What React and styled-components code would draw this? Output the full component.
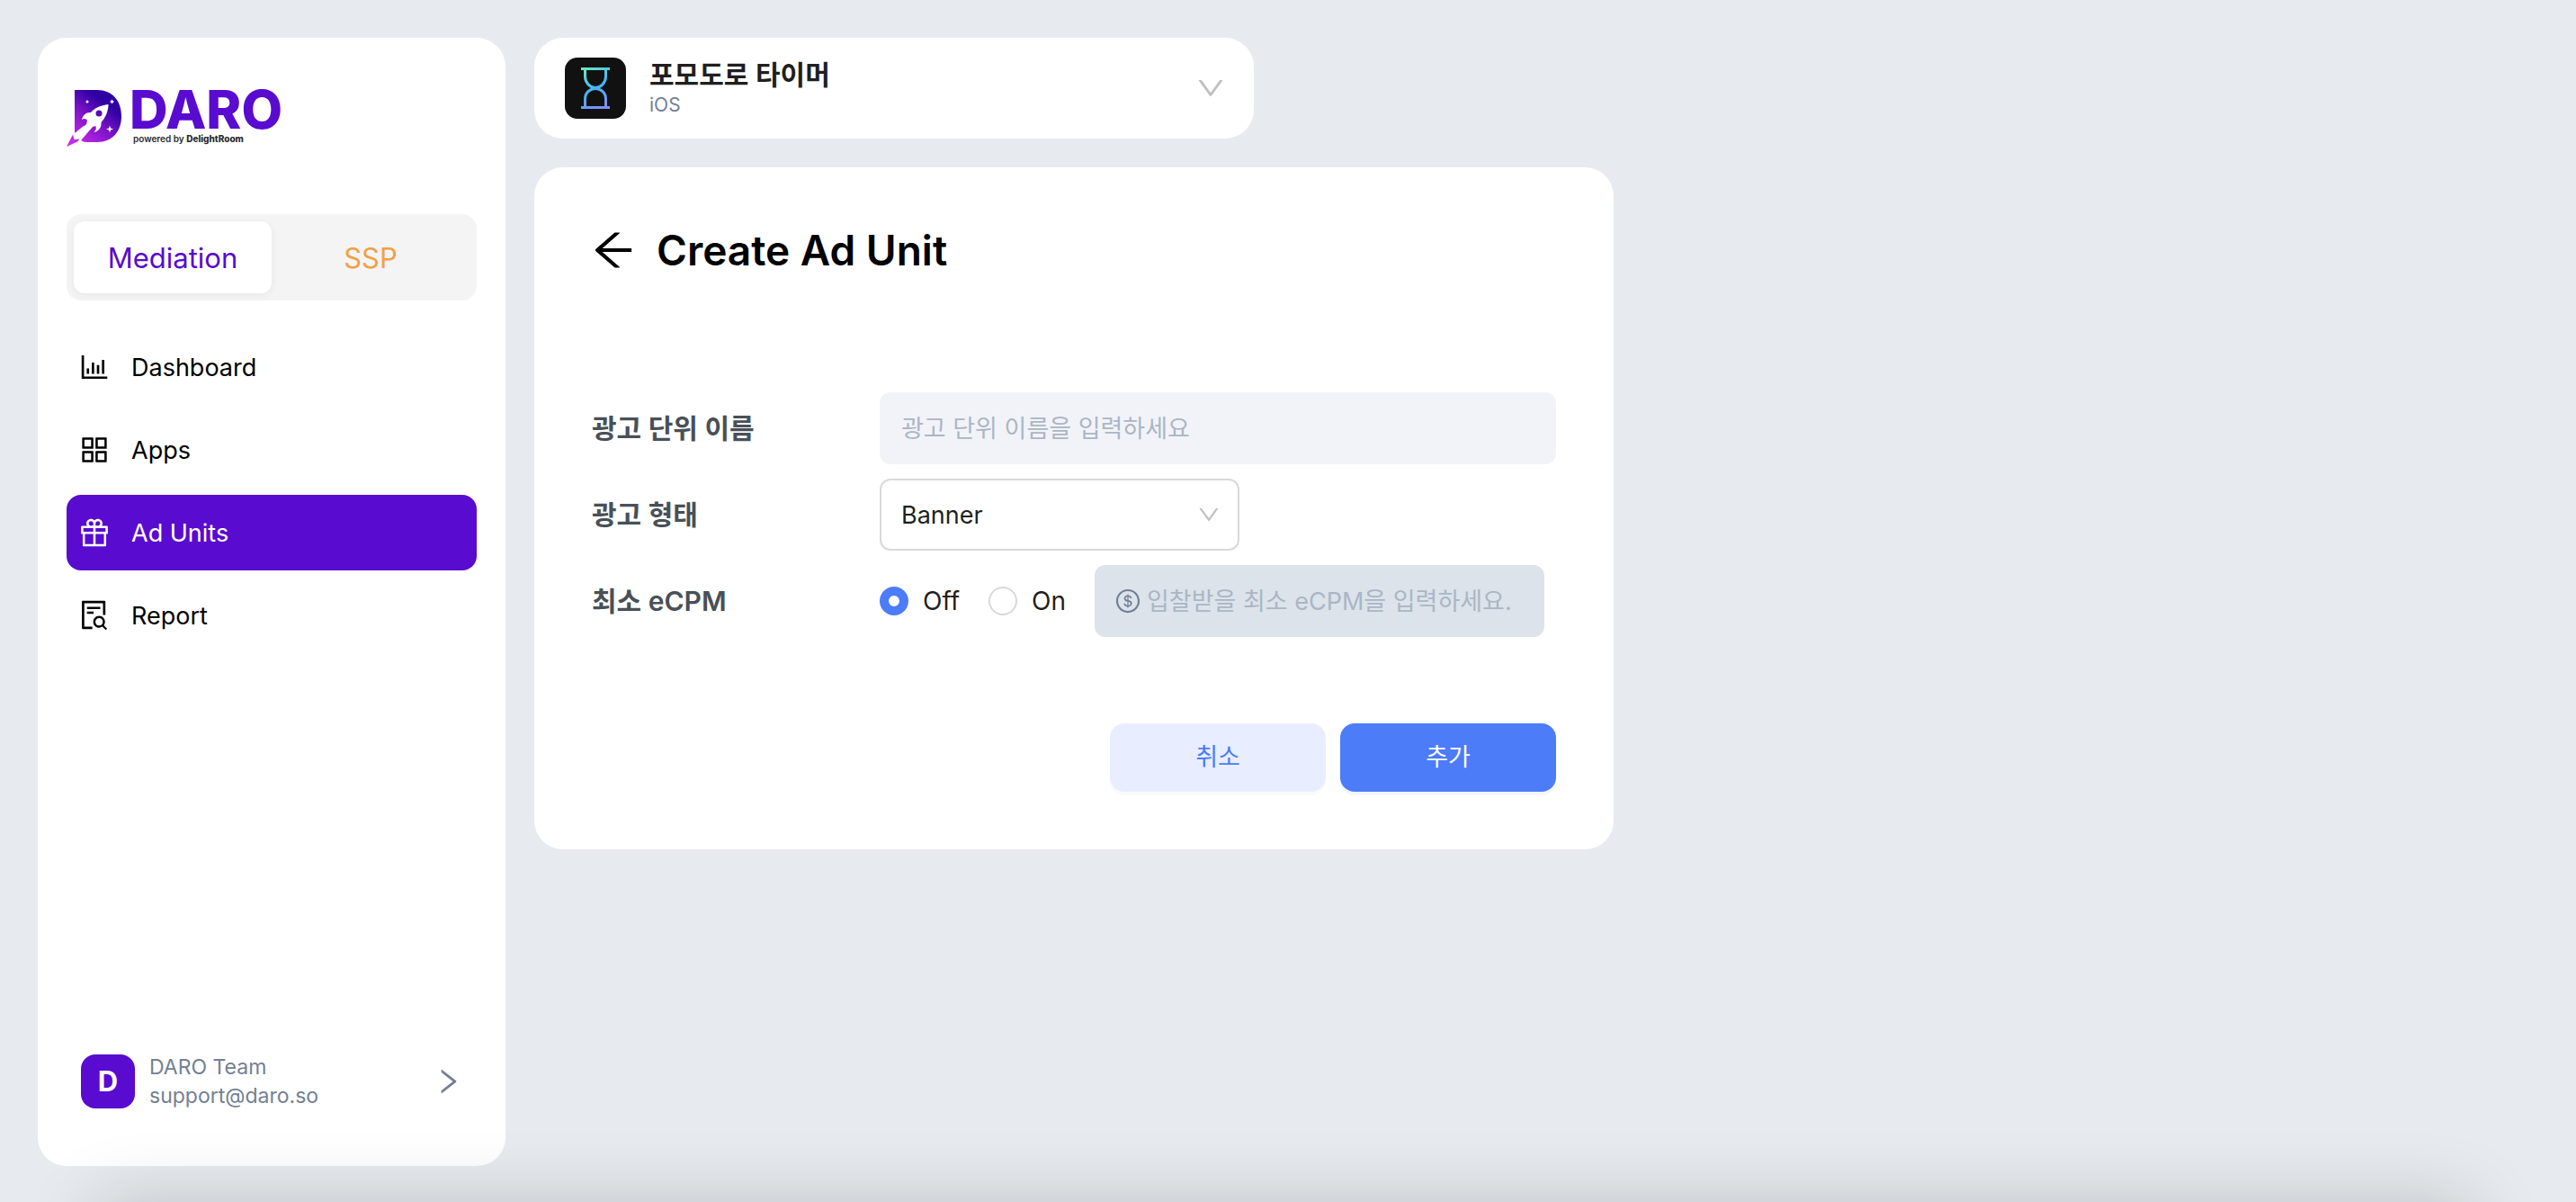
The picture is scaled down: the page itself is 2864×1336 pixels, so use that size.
import React, { useState } from "react";
import styled, { createGlobalStyle } from "styled-components";
import {
  AiOutlineBarChart,
  AiOutlineAppstore,
  AiOutlineGift,
  AiOutlineFileSearch,
  AiOutlineRight,
  AiOutlineDown,
  AiOutlineArrowLeft,
  AiOutlineDollarCircle,
} from "react-icons/ai";

const GlobalStyle = createGlobalStyle`
  *, *::before, *::after { box-sizing: border-box; }
  body {
    margin: 0;
    background: #e7ebef;
    color: #000;
    font-family: Inter, "Noto Sans CJK KR", sans-serif;
    font-size: 27px;
  }
  button, input, select { font: inherit; color: inherit; }
  h1, p { margin: 0; }
  svg { display: block; flex: none; }
`;

const Page = styled.div`
  display: flex;
  align-items: stretch;
  gap: 32px;
  min-height: 100vh;
  padding: 42px 42px 40px;
`;

const Sidebar = styled.aside`
  display: flex;
  flex-direction: column;
  flex: none;
  width: 520px;
  padding: 56px 32px 62px;
  background: #fff;
  border-radius: 32px;
`;

const Logo = styled.a`
  display: flex;
  gap: 8px;
  height: 68px;
  color: #590bd0;
  text-decoration: none;
`;

const LogoText = styled.span`
  display: flex;
  flex-direction: column;
`;

const LogoName = styled.span`
  font-size: 59px;
  font-weight: 800;
  line-height: 48px;
`;

const LogoTagline = styled.span`
  padding-left: 4px;
  color: #2b2b2b;
  font-size: 10px;
  font-weight: 600;
  line-height: 16px;

  b { font-weight: 800; }
`;

const Tabs = styled.div`
  display: flex;
  margin-top: 72px;
  padding: 8px;
  background: #f4f4f4;
  border-radius: 16px;
`;

const Tab = styled.button`
  flex: 1;
  height: 80px;
  padding: 0;
  border: 0;
  border-radius: 12px;
  background: ${(p) => (p.$active ? "#fff" : "transparent")};
  box-shadow: ${(p) => (p.$active ? "0 2px 8px rgba(0, 0, 0, 0.06)" : "none")};
  color: ${(p) => p.$color};
  font-size: 31px;
  cursor: pointer;
`;

const Nav = styled.nav`
  display: flex;
  flex-direction: column;
  gap: 8px;
  margin-top: 32px;
`;

const NavItem = styled.a`
  display: flex;
  align-items: center;
  gap: 22px;
  height: 84px;
  padding: 0 12px;
  border-radius: 16px;
  background: ${(p) => (p.$active ? "#590bd0" : "transparent")};
  color: ${(p) => (p.$active ? "#fff" : "#000")};
  text-decoration: none;
`;

const Account = styled.button`
  display: flex;
  align-items: center;
  gap: 16px;
  margin-top: auto;
  padding: 0 14px 0 16px;
  border: 0;
  background: none;
  color: #738093;
  font-size: 23px;
  line-height: 32px;
  text-align: left;
  cursor: pointer;
`;

const Avatar = styled.span`
  display: grid;
  place-items: center;
  width: 60px;
  height: 60px;
  border-radius: 16px;
  background: #590bd0;
  color: #fff;
  font-size: 31px;
  font-weight: 700;
`;

const AccountText = styled.span`
  display: flex;
  flex: 1;
  flex-direction: column;
`;

const Main = styled.main`
  display: flex;
  flex: 1;
  flex-direction: column;
  align-items: flex-start;
  gap: 32px;
  min-width: 0;
`;

const AppPicker = styled.button`
  display: flex;
  align-items: center;
  gap: 26px;
  width: 100%;
  max-width: 800px;
  height: 112px;
  padding: 0 30px 0 34px;
  border: 0;
  border-radius: 32px;
  background: #fff;
  color: #bfbfbf;
  text-align: left;
  cursor: pointer;
`;

const AppText = styled.span`
  display: flex;
  flex: 1;
  flex-direction: column;
`;

const AppName = styled.span`
  color: #1f1f1f;
  font-size: 30px;
  font-weight: 600;
  line-height: 38px;
`;

const AppPlatform = styled.span`
  color: #738093;
  font-size: 21px;
  line-height: 30px;
`;

const Card = styled.section`
  width: 100%;
  max-width: 1200px;
  padding: 64px;
  border-radius: 32px;
  background: #fff;
`;

const CardHeader = styled.header`
  display: flex;
  align-items: center;
  gap: 20px;
  height: 56px;
`;

const BackButton = styled.button`
  display: grid;
  place-items: center;
  width: 56px;
  height: 56px;
  margin-left: -4px;
  padding: 0;
  border: 0;
  background: none;
  cursor: pointer;
`;

const Title = styled.h1`
  font-size: 46px;
  font-weight: 600;
  line-height: 56px;
`;

const Form = styled.form`
  display: flex;
  flex-direction: column;
  gap: 16px;
  margin-top: 130px;
`;

const Row = styled.div`
  display: grid;
  grid-template-columns: 320px 1fr;
  align-items: center;
  min-height: 80px;
`;

const Label = styled.label`
  padding-bottom: 4px;
  color: #495057;
  font-size: 30px;
  font-weight: 600;
`;

const TextInput = styled.input`
  width: 100%;
  height: 80px;
  padding: 0 24px;
  border: 0;
  border-radius: 12px;
  background: #f2f3f8;

  &::placeholder { color: #aab6c5; opacity: 1; }
`;

const SelectBox = styled.div`
  display: grid;
  align-items: center;
  width: 400px;

  > * { grid-area: 1 / 1; }
  svg {
    justify-self: end;
    margin-right: 20px;
    color: #bfbfbf;
    pointer-events: none;
  }
`;

const Select = styled.select`
  width: 100%;
  height: 80px;
  padding: 0 22px;
  border: 2px solid #d9d9d9;
  border-radius: 12px;
  background: #fff;
  color: #1f1f1f;
  appearance: none;
`;

const Options = styled.div`
  display: flex;
  align-items: center;
  gap: 32px;
`;

const RadioLabel = styled.label`
  display: flex;
  align-items: center;
  gap: 16px;
  color: #1f1f1f;
  font-size: 28px;
`;

const Radio = styled.input`
  width: 32px;
  height: 32px;
  margin: 0;
  border: 2px solid #d9d9d9;
  border-radius: 50%;
  background: #fff;
  appearance: none;

  &:checked { border: 10px solid #4c7cf8; }
`;

const PriceBox = styled.label`
  display: flex;
  align-items: center;
  gap: 6px;
  width: 500px;
  height: 80px;
  padding: 0 22px;
  border-radius: 12px;
  background: #dce3ea;
  color: #738093;
`;

const PriceInput = styled.input`
  flex: 1;
  min-width: 0;
  padding: 0;
  border: 0;
  background: none;

  &::placeholder { color: #aab6c5; opacity: 1; }
`;

const Actions = styled.div`
  display: flex;
  justify-content: flex-end;
  gap: 16px;
  margin-top: 80px;
`;

const ActionButton = styled.button`
  width: 240px;
  height: 76px;
  padding: 0 0 6px;
  border: 0;
  border-radius: 16px;
  background: ${(p) => (p.$primary ? "#4c7cf8" : "#e8eeff")};
  box-shadow: 0 4px 0 ${(p) => (p.$primary ? "#f2f6ff" : "#fafafa")};
  color: ${(p) => (p.$primary ? "#fff" : "#4c7cf8")};
  cursor: pointer;
`;

const BottomShade = styled.div`
  position: fixed;
  top: 100%;
  left: 108px;
  right: 116px;
  height: 200px;
  box-shadow: 0 0 80px rgba(0, 0, 0, 0.18);
  pointer-events: none;
`;

const RocketMark = () => (
  <svg width="62" height="68" viewBox="0 0 62 68" aria-hidden="true">
    <defs>
      <linearGradient id="mark" x1="10" y1="66" x2="52" y2="10" gradientUnits="userSpaceOnUse">
        <stop offset="0" stopColor="#d42df0" />
        <stop offset="0.5" stopColor="#7d14c8" />
        <stop offset="0.85" stopColor="#2f00a4" />
      </linearGradient>
    </defs>
    <path fill="url(#mark)" d="M9 2H34C51 2 61 14 61 31S51 60 34 60H22C16 60 14 56 16 52L26 43L19 42L9 50Z" />
    <path fill="#fff" d="M46.500 18C38 19 31 22 27 27C22 26.500 18 30 17 35C20 33 22 34 23 36L22 40L8 52L7 58L15 56L16 58L29 43L32 42C33.500 44 33 46 30.500 49C36 48 39 43 38.500 38C43 33 46.500 26 46.500 18Z" />
    <path fill="#c42be8" d="M0 65L7 51.500L8.500 57L14.500 56.500L12 59.500Z" />
    <circle cx="36" cy="28" r="3.500" fill="#5a0ab8" />
    <path fill="#fff" d="M48 41.500L49 44.500L52 45.500L49 46.500L48 49.500L47 46.500L44 45.500L47 44.500ZM50.500 12.500L51.500 14L53 15L51.500 16L50.500 17.500L49.500 16L48 15L49.500 14Z" />
    <circle cx="23" cy="15" r="1.500" fill="#fff" />
  </svg>
);

const HourglassIcon = () => (
  <svg width="68" height="68" viewBox="0 0 68 68" aria-hidden="true">
    <defs>
      <linearGradient id="sand" x1="18" y1="10" x2="50" y2="58" gradientUnits="userSpaceOnUse">
        <stop offset="0" stopColor="#6ff0b8" />
        <stop offset="0.5" stopColor="#46b4f8" />
        <stop offset="1" stopColor="#8f85f5" />
      </linearGradient>
    </defs>
    <rect width="68" height="68" rx="14" fill="#111" />
    <g fill="none" stroke="url(#sand)" strokeWidth="3">
      <path d="M18 12.500H50M18 55.501H50" />
      <path d="M22.500 13V21C22.500 28 28 33.500 34 33.500S45.500 28 45.500 21V13" />
      <path d="M22.500 55V46C22.500 39 28 34.500 34 34.500S45.500 39 45.500 46V55" />
    </g>
  </svg>
);

const NAV = [
  { name: "Dashboard", Icon: AiOutlineBarChart },
  { name: "Apps", Icon: AiOutlineAppstore },
  { name: "Ad Units", Icon: AiOutlineGift, active: true },
  { name: "Report", Icon: AiOutlineFileSearch },
];

export default function App() {
  const [floor, setFloor] = useState("off");

  return (
    <>
      <GlobalStyle />
      <Page>
        <Sidebar>
          <Logo href="#">
            <RocketMark />
            <LogoText>
              <LogoName>DARO</LogoName>
              <LogoTagline>
                powered by <b>DelightRoom</b>
              </LogoTagline>
            </LogoText>
          </Logo>
          <Tabs>
            <Tab type="button" $active $color="#590bd0">Mediation</Tab>
            <Tab type="button" $color="#f2a044">SSP</Tab>
          </Tabs>
          <Nav>
            {NAV.map(({ name, Icon, active }) => (
              <NavItem key={name} href="#" $active={active}>
                <Icon size={38} />
                {name}
              </NavItem>
            ))}
          </Nav>
          <Account type="button">
            <Avatar>D</Avatar>
            <AccountText>
              <span>DARO Team</span>
              <span>support@daro.so</span>
            </AccountText>
            <AiOutlineRight size={36} />
          </Account>
        </Sidebar>
        <Main>
          <AppPicker type="button">
            <HourglassIcon />
            <AppText>
              <AppName>포모도로 타이머</AppName>
              <AppPlatform>iOS</AppPlatform>
            </AppText>
            <AiOutlineDown size={36} />
          </AppPicker>
          <Card>
            <CardHeader>
              <BackButton type="button" aria-label="Back">
                <AiOutlineArrowLeft size={56} />
              </BackButton>
              <Title>Create Ad Unit</Title>
            </CardHeader>
            <Form onSubmit={(e) => e.preventDefault()}>
              <Row>
                <Label htmlFor="unit-name">광고 단위 이름</Label>
                <TextInput id="unit-name" placeholder="광고 단위 이름을 입력하세요" />
              </Row>
              <Row>
                <Label htmlFor="unit-type">광고 형태</Label>
                <SelectBox>
                  <Select id="unit-type" defaultValue="Banner">
                    <option>Banner</option>
                  </Select>
                  <AiOutlineDown size={28} />
                </SelectBox>
              </Row>
              <Row>
                <Label as="span" id="floor-label">최소 eCPM</Label>
                <Options role="radiogroup" aria-labelledby="floor-label">
                  <RadioLabel>
                    <Radio type="radio" name="floor" checked={floor === "off"} onChange={() => setFloor("off")} />
                    Off
                  </RadioLabel>
                  <RadioLabel>
                    <Radio type="radio" name="floor" checked={floor === "on"} onChange={() => setFloor("on")} />
                    On
                  </RadioLabel>
                  <PriceBox>
                    <AiOutlineDollarCircle size={30} />
                    <PriceInput
                      aria-labelledby="floor-label"
                      disabled={floor === "off"}
                      placeholder="입찰받을 최소 eCPM을 입력하세요."
                    />
                  </PriceBox>
                </Options>
              </Row>
              <Actions>
                <ActionButton type="button">취소</ActionButton>
                <ActionButton type="submit" $primary>추가</ActionButton>
              </Actions>
            </Form>
          </Card>
        </Main>
      </Page>
      <BottomShade />
    </>
  );
}
